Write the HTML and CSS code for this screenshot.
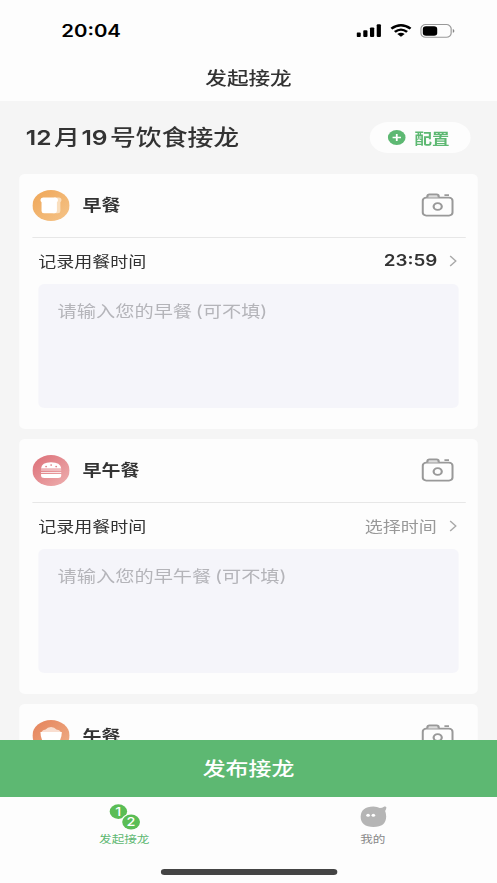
FILE: index.html
```html
<!DOCTYPE html>
<html lang="zh-CN">
<head>
<meta charset="utf-8">
<title>发起接龙</title>
<link rel="stylesheet" href="styles.css">
</head>
<body>
<svg class="defs" width="0" height="0" aria-hidden="true">
  <symbol id="camera" viewBox="0 0 27 24">
    <g fill="none" stroke="#999" stroke-width="1.8" stroke-linejoin="round">
      <rect x="1.1" y="4.7" width="24.9" height="17.9" rx="3"/>
      <path d="M5 4.5V3.2Q5 1.3 6.8 1.3H12.6Q14.4 1.3 14.4 3.2V4.5" fill="#ddd"/>
      <circle cx="13.6" cy="13.5" r="3.4"/>
      <path d="M19.2 2.2H23"/>
    </g>
  </symbol>
  <symbol id="chevron" viewBox="0 0 7 12"><path d="M1 1L5.7 6L1 11" fill="none" stroke="#aaa" stroke-width="1.2"/></symbol>
</svg>
<div class="app">
  <header class="header">
    <div class="status">
      <span class="clock">20:04</span>
      <div class="indicators">
        <svg width="22" height="14" viewBox="0 0 22 14"><rect x="0" y="8.6" width="3.5" height="4.4" rx=".9"/><rect x="5.6" y="6.2" width="3.5" height="6.8" rx=".9"/><rect x="11.2" y="3.4" width="3.5" height="9.6" rx=".9"/><rect x="16.8" y="0.3" width="3.5" height="12.7" rx=".9"/></svg>
        <svg class="wifi" width="18" height="14" viewBox="0 0 18 14"><g fill="none" stroke="#000" stroke-width="2.2"><path d="M1 4.7Q9 -2.2 17 4.7"/><path d="M3.9 7.9Q9 3.4 14.1 7.9"/></g><path d="M9 12.8L5.9 9.9Q9 7.6 12.1 9.9Z"/></svg>
        <svg class="battery" width="29" height="14" viewBox="0 0 29 14"><rect x=".6" y=".6" width="25.2" height="12.7" rx="4" fill="none" stroke="#999" stroke-width="1"/><rect x="2.2" y="2.2" width="12" height="9.5" rx="2.7"/><path d="M27.2 5Q28.5 5.4 28.5 6.9T27.2 8.8Z" fill="#888"/></svg>
      </div>
    </div>
    <h1 class="nav-title">发起接龙</h1>
  </header>
  <main class="content">
    <div class="heading">
      <h2><span class="num">12</span>月<span class="num day">19</span>号饮食接龙</h2>
      <button class="config"><svg width="15" height="15" viewBox="0 0 15 15"><circle cx="7.5" cy="7.5" r="7.4" fill="#5db872"/><path d="M7.5 4V11M4 7.5H11" stroke="#fff" stroke-width="1.5"/></svg>配置</button>
    </div>
    <section class="card">
      <div class="meal">
        <svg class="meal-icon" viewBox="0 0 31 31"><defs><linearGradient id="gold" x2="1" y2="1"><stop stop-color="#efa657"/><stop offset="1" stop-color="#f5c489"/></linearGradient></defs><circle cx="15.5" cy="15.5" r="15.5" fill="url(#gold)"/><path d="M18 7.5H22Q24.2 7.6 24.2 10Q24.2 11.3 23.3 12.2V21Q23.3 23.2 21.2 23.2H17Z" fill="#fadfbe"/><path d="M8.9 7.5H19.2Q21.3 7.7 21.3 10Q21.3 11.3 20.4 12.2V21Q20.4 23.2 18.3 23.2H9.6Q7.6 23.2 7.6 21V12.2Q6.7 11.3 6.7 10Q6.7 7.7 8.9 7.5Z" fill="#fff"/></svg>
        <h3>早餐</h3>
        <svg class="camera"><use href="#camera"/></svg>
      </div>
      <div class="time"><span>记录用餐时间</span><b class="value">23:59</b><svg class="chevron"><use href="#chevron"/></svg></div>
      <div class="field">请输入您的早餐<span class="paren">(</span>可不填<span>)</span></div>
    </section>
    <section class="card">
      <div class="meal">
        <svg class="meal-icon" viewBox="0 0 31 31"><defs><linearGradient id="rose" x2="1" y2="1"><stop stop-color="#dc6e77"/><stop offset="1" stop-color="#eeb0b0"/></linearGradient></defs><circle cx="15.5" cy="15.5" r="15.5" fill="url(#rose)"/><path d="M7.2 13.5Q7.6 7.2 15.5 7.2T24 13.5Z" fill="#fff"/><path d="M7.2 15.1H24M7.2 17.4H24" stroke="#fff" stroke-opacity=".75" stroke-width="1"/><path d="M7.2 19H24V20.5Q24 23 21.3 23H10Q7.2 23 7.2 20.5Z" fill="#fff"/><g fill="#e0858c"><circle cx="11.4" cy="11.6" r=".8"/><circle cx="15.6" cy="10.1" r=".8"/><circle cx="19.8" cy="11.6" r=".8"/></g></svg>
        <h3>早午餐</h3>
        <svg class="camera"><use href="#camera"/></svg>
      </div>
      <div class="time"><span>记录用餐时间</span><span class="value unset">选择时间</span><svg class="chevron"><use href="#chevron"/></svg></div>
      <div class="field">请输入您的早午餐<span class="paren">(</span>可不填<span>)</span></div>
    </section>
    <section class="card">
      <div class="meal">
        <svg class="meal-icon" viewBox="0 0 31 31"><defs><linearGradient id="coral" x2="1" y2="1"><stop stop-color="#e5825a"/><stop offset="1" stop-color="#efb088"/></linearGradient></defs><circle cx="15.5" cy="15.5" r="15.5" fill="url(#coral)"/><path d="M7.5 12Q8.5 9.5 11 9.5Q12.5 7 15.5 7Q18.5 7 20 9.5Q22.7 9.5 23.7 12Z" fill="#f9ded0"/><path d="M6.7 12H24.5Q24.5 20.5 20 24H11Q6.7 20.5 6.7 12Z" fill="#fff"/></svg>
        <h3>午餐</h3>
        <svg class="camera"><use href="#camera"/></svg>
      </div>
    </section>
  </main>
  <button class="publish">发布接龙</button>
  <nav class="tabs">
    <a class="tab active"><svg width="26" height="26" viewBox="0 0 26 26"><g fill="#5abd55"><circle cx="7.6" cy="7.6" r="7.3"/><circle cx="18.2" cy="18" r="8.6" fill="#fdfdfd"/><circle cx="18.2" cy="18" r="7.4"/></g><text x="7.4" y="12">1</text><text x="18.1" y="22.4">2</text></svg><span>发起接龙</span></a>
    <a class="tab"><svg width="26" height="26" viewBox="0 0 26 26"><path d="M13 2.4Q16.3 2.4 18.4 4Q20.2 4 22.2 2.5Q24.3 2 23.8 4Q23.6 5.5 22.8 7Q23.7 9.2 23.7 12.5Q23.5 23 13.1 23Q2.4 22.7 2.4 12.5Q2.7 2.7 13 2.4Z" fill="#b5b5b5"/><circle cx="8.6" cy="11.2" r="1.5" fill="#fff"/><circle cx="13" cy="11.2" r="1.5" fill="#fff"/></svg><span>我的</span></a>
  </nav>
  <div class="home"></div>
</div>
</body>
</html>
```
FILE: styles.css
```css
* { box-sizing: border-box; margin: 0; padding: 0; }
html, body { width: 497px; height: 883px; overflow: hidden; background: #f5f5f5; }
body { font-family: Inter, "Noto Sans CJK SC", sans-serif; color: #333; }
button { border: 0; font: inherit; }
svg { display: block; flex: none; }
.defs { position: absolute; }

/* 414pt wide canvas stretched to the window width */
.app {
  width: 414px;
  height: 883px;
  display: flex;
  flex-direction: column;
  transform: scaleX(1.2005);
  transform-origin: 0 0;
}

.header { flex: none; height: 101px; background: #fdfdfd; }
.status { height: 60px; padding: 0 34.7px 0 51px; display: flex; align-items: center; justify-content: space-between; }
.clock { font-size: 17px; font-weight: 600; color: #000; line-height: 20px; margin-top: 1px; }
.indicators { display: flex; align-items: center; margin-top: 1px; }
.wifi { margin-left: 5.6px; }
.battery { margin-left: 7.6px; }
.nav-title { font-size: 18px; font-weight: 500; line-height: 38px; text-align: center; }

.content { flex: 1; min-height: 0; overflow: hidden; padding: 0 16px; }
.heading { height: 73px; padding: 0 6.2px 0 5.5px; display: flex; align-items: center; justify-content: space-between; }
.heading h2 { font-size: 21.5px; font-weight: 500; line-height: 32px; white-space: nowrap; }
.num { margin-right: 2px; font-size: 20.5px; font-weight: 600; }
.day { margin-left: 1.4px; }
.config {
  width: 84px; height: 31px; border-radius: 16px; background: #fdfdfd; color: #5db872;
  display: flex; align-items: center; justify-content: center; gap: 7px;
  padding: 0 2px 1px 0; font-size: 14.6px; font-weight: 700;
}

.card { height: 255px; margin-bottom: 10.2px; padding: 0 10.5px; border-radius: 5px; background: #fdfdfd; }
.meal { height: 63.5px; border-bottom: 1.5px solid #e7e7e7; display: flex; align-items: center; }
.meal-icon { width: 31px; height: 31px; }
.meal h3 { margin-left: 11.2px; padding-bottom: 1px; font-size: 15.8px; font-weight: 700; }
.camera { width: 27px; height: 24px; margin-left: auto; margin-right: 10px; }
.time { height: 46.5px; padding: 0 6.7px 0 5.3px; display: flex; align-items: center; font-size: 15px; }
.time span { padding-bottom: 1px; }
.value { margin-left: auto; font-size: 15.7px; font-weight: 600; }
.time .unset { font-size: 15px; font-weight: 400; color: #999; margin-right: 1px; }
.chevron { width: 7px; height: 12px; margin-left: 9.5px; }
.unset + .chevron { margin-left: 9px; }
.field {
  height: 124px; margin: 0 5.5px; padding: 15px 16px; border-radius: 5px;
  background: #f5f5fa; color: #b4b4b9; font-size: 16px; line-height: 24px; white-space: nowrap;
}
.paren { margin-left: 3px; }

.publish { flex: none; height: 57px; padding-bottom: 1px; background: #5db872; color: #fff; font-size: 19.1px; font-weight: 500; }
.tabs { flex: none; height: 72px; background: #fdfdfd; display: flex; }
.tab { width: 50%; padding-top: 7px; display: flex; flex-direction: column; align-items: center; font-size: 10.5px; line-height: 15px; color: #888; }
.tab span { margin-top: 2px; }
.tab.active { color: #5db872; }
.tab text { fill: #fff; font-size: 12px; font-weight: 500; text-anchor: middle; }
.home { flex: none; height: 14px; background: #fdfdfd; }
.home::before { content: ""; display: block; width: 147px; height: 5.5px; margin: 0 auto; border-radius: 3px; background: #444; }
```
